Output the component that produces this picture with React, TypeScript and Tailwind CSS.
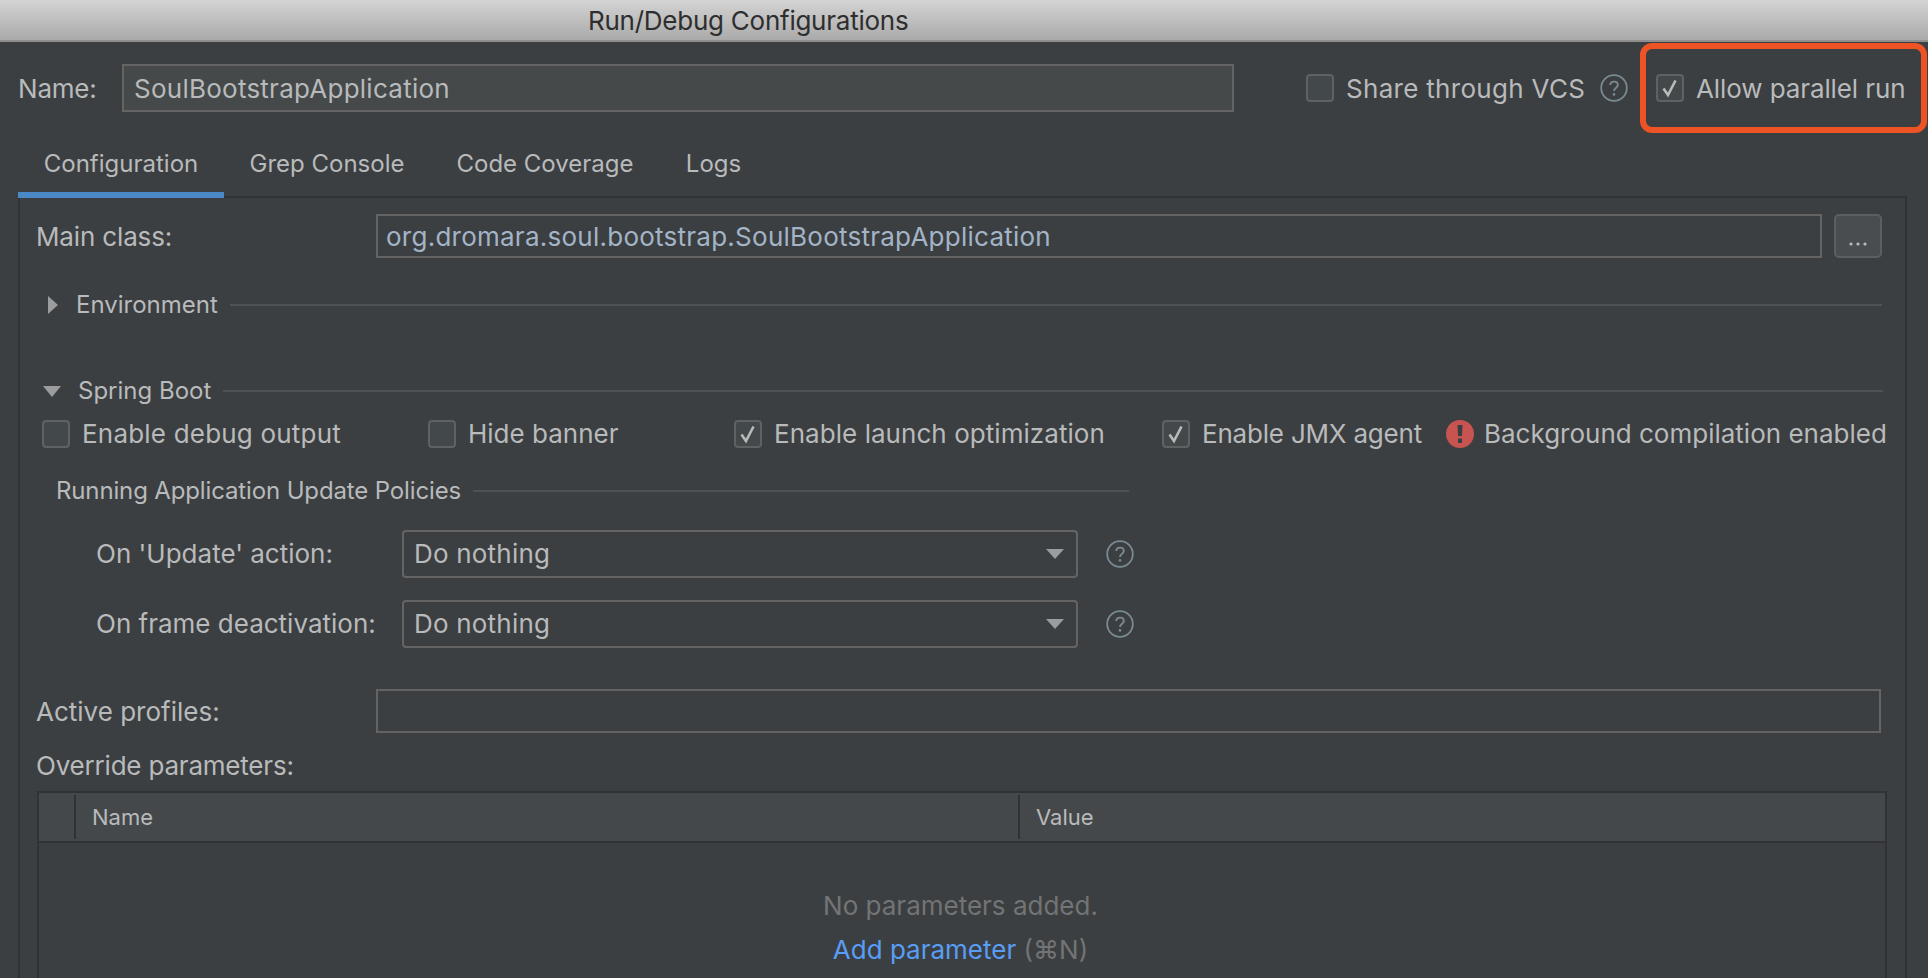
import type { ReactNode } from "react";

function Checkbox({ checked = false }: { checked?: boolean }) {
  return (
    <span className="flex h-7 w-7 shrink-0 items-center justify-center rounded-[4px] border-2 border-[#5f6263] bg-[#43494a]">
      {checked && (
        <svg width="20" height="22" viewBox="0 0 20 22" fill="none">
          <path d="M3.5 11.5 L8 18 L15.5 3.5" stroke="#b9bbbb" strokeWidth="2.6" />
        </svg>
      )}
    </span>
  );
}

function HelpIcon() {
  return (
    <svg width="28" height="28" viewBox="0 0 28 28" fill="none" className="shrink-0">
      <circle cx="14" cy="14" r="12.8" stroke="#7a8a94" strokeWidth="1.8" />
      <path d="M10.2 11 C10.4 8.6 12 7.6 14 7.6 C16.2 7.6 17.8 9 17.8 10.9 C17.8 13.6 14 13.8 14 17" stroke="#7a8a94" strokeWidth="1.9" />
      <circle cx="14" cy="20.4" r="1.3" fill="#7a8a94" />
    </svg>
  );
}

function SectionLine({ className }: { className: string }) {
  return <div className={`h-[2px] bg-[#4f5152] ${className}`} />;
}

function CheckItem({ label, checked, width, tracking = "" }: { label: string; checked?: boolean; width: string; tracking?: string }) {
  return (
    <label className={`flex shrink-0 items-center gap-3 ${width}`}>
      <Checkbox checked={checked} />
      <span className={tracking}>{label}</span>
    </label>
  );
}

function ComboRow({ label, className }: { label: ReactNode; className: string }) {
  return (
    <div className={`flex items-center ${className}`}>
      <div className="w-[382px] whitespace-nowrap pl-[76px]">{label}</div>
      <div className="flex h-12 w-[676px] items-center justify-between rounded-[4px] border-2 border-[#646464] pl-[10px] pr-3">
        <span className="tracking-[0.2px]">Do nothing</span>
        <svg width="18" height="12" viewBox="0 0 18 12">
          <path d="M0 1 H18 L9 11 Z" fill="#9a9c9d" />
        </svg>
      </div>
      <div className="ml-7">
        <HelpIcon />
      </div>
    </div>
  );
}

export default function App() {
  return (
    <main className="relative h-[978px] w-[1928px] overflow-hidden bg-[#3c3f41] font-['Inter',sans-serif] text-[26px] leading-[32px] text-[#b8babb]">
      <header className="flex h-[42px] items-center border-b-2 border-[#8f8f8f] bg-gradient-to-b from-[#d4d4d4] to-[#aaaaaa] pl-[588px] pt-[2px] tracking-[-0.25px] text-[#2e2e2e]">
        Run/Debug Configurations
      </header>

      <section className="mt-[22px] flex h-12 items-center">
        <span className="w-[122px] pl-[18px] pt-[2px] tracking-[-0.2px]">Name:</span>
        <div className="flex h-12 w-[1112px] items-center border-2 border-[#646464] bg-[#45494a] pl-[10px] pt-[2px] tracking-[0.25px]">
          SoulBootstrapApplication
        </div>
        <div className="ml-[72px] flex items-center">
          <Checkbox />
          <span className="ml-3 w-[254px] pt-[2px] tracking-[0.3px]">Share through VCS</span>
          <HelpIcon />
          <div className="ml-7 flex items-center gap-3">
            <Checkbox checked />
            <span className="pt-[2px] tracking-[-0.1px]">Allow parallel run</span>
          </div>
        </div>
      </section>

      <div className="absolute left-[1640px] top-[43px] h-[90px] w-[287px] rounded-[12px] border-[6px] border-[#ee5326]" />

      <nav className="ml-[18px] flex h-[86px] w-[1889px] items-end border-b-2 border-[#303234] text-[24px]">
        <div className="-mb-[2px] flex h-[56px] w-[206px] items-start justify-center border-b-[6px] border-[#4a88c7] pt-[6px]">Configuration</div>
        <div className="-mb-[2px] flex h-[56px] w-[206px] items-start justify-center pt-[6px]">Grep Console</div>
        <div className="-mb-[2px] flex h-[56px] w-[230px] items-start justify-center pt-[6px]">Code Coverage</div>
        <div className="-mb-[2px] flex h-[56px] w-[107px] items-start justify-center pt-[6px]">Logs</div>
      </nav>

      <section className="ml-[18px] h-[780px] w-[1889px] border-x-2 border-[#303234] pt-[16px]">
        <div className="flex h-11 items-center">
          <span className="w-[356px] pl-4 pt-[2px] tracking-[-0.15px]">Main class:</span>
          <div className="flex h-11 w-[1446px] items-center border-2 border-[#646464] pl-2 pt-[2px] tracking-[0.25px] text-[#a3b4c7]">
            org.dromara.soul.bootstrap.SoulBootstrapApplication
          </div>
          <button className="ml-3 flex h-11 w-12 items-end justify-center rounded-[5px] border-2 border-[#5c5f60] bg-[#4a4d4f] pb-[10px]">
            <svg width="20" height="4" viewBox="0 0 20 4">
              <circle cx="3" cy="2" r="1.6" fill="#bbbbbb" />
              <circle cx="10" cy="2" r="1.6" fill="#bbbbbb" />
              <circle cx="17" cy="2" r="1.6" fill="#bbbbbb" />
            </svg>
          </button>
        </div>

        <div className="mt-8 flex h-[30px] items-center text-[24px]">
          <svg width="10" height="18" viewBox="0 0 10 18" className="ml-7">
            <path d="M0 0 L10 9 L0 18 Z" fill="#9a9c9d" />
          </svg>
          <span className="ml-[18px]">Environment</span>
          <SectionLine className="ml-3 w-[1652px]" />
        </div>

        <div className="mt-14 flex h-[30px] items-center text-[24px]">
          <svg width="18" height="11" viewBox="0 0 18 11" className="ml-[23px]">
            <path d="M0 0 H18 L9 11 Z" fill="#9a9c9d" />
          </svg>
          <span className="ml-[17px]">Spring Boot</span>
          <SectionLine className="ml-3 w-[1660px]" />
        </div>

        <div className="mt-[14px] flex h-7 items-center whitespace-nowrap pl-[22px]">
          <CheckItem label="Enable debug output" width="w-[386px]" tracking="tracking-[0.2px]" />
          <CheckItem label="Hide banner" width="w-[306px]" />
          <CheckItem label="Enable launch optimization" checked width="w-[428px]" tracking="tracking-[0.05px]" />
          <CheckItem label="Enable JMX agent" checked width="w-[284px]" tracking="tracking-[-0.2px]" />
          <span className="flex h-7 w-7 shrink-0 items-center justify-center rounded-full bg-[#c75450]">
            <svg width="6" height="18" viewBox="0 0 6 18">
              <path d="M0.5 0 H5.5 L5 11 H1 Z M1 13.5 H5 V18 H1 Z" fill="#3c3f41" />
            </svg>
          </span>
          <span className="ml-[10px]">Background compilation enabled</span>
        </div>

        <div className="mt-7 flex h-[30px] items-center pl-9 text-[24px] tracking-[-0.14px]">
          <span>Running Application Update Policies</span>
          <SectionLine className="ml-3 w-[656px]" />
        </div>

        <ComboRow label="On 'Update' action:" className="mt-6" />
        <ComboRow label="On frame deactivation:" className="mt-[22px]" />

        <div className="mt-[41px] flex h-11 items-center">
          <span className="w-[356px] pl-4 pt-[2px]">Active profiles:</span>
          <div className="h-11 w-[1505px] border-2 border-[#646464]" />
        </div>

        <div className="mt-[18px] flex h-[30px] items-center pl-4 tracking-[-0.2px]">Override parameters:</div>

        <div className="ml-[17px] mt-[10px] h-[300px] w-[1850px] border-x-2 border-t-2 border-[#303234]">
          <div className="flex h-[50px] items-center border-b-2 border-[#303234] bg-[#45484a] text-[22px]">
            <div className="h-[44px] w-[37px] border-r-2 border-[#303234]" />
            <div className="flex h-[44px] w-[944px] items-center border-r-2 border-[#303234] pl-4">Name</div>
            <div className="pl-4">Value</div>
          </div>
          <div className="flex flex-col items-center pr-[3px] pt-[47px]">
            <div className="text-[#727475]">No parameters added.</div>
            <div className="mt-3">
              <span className="text-[#589df6]">Add parameter</span>
              <span className="text-[#727475]"> (⌘N)</span>
            </div>
          </div>
        </div>
      </section>
    </main>
  );
}
